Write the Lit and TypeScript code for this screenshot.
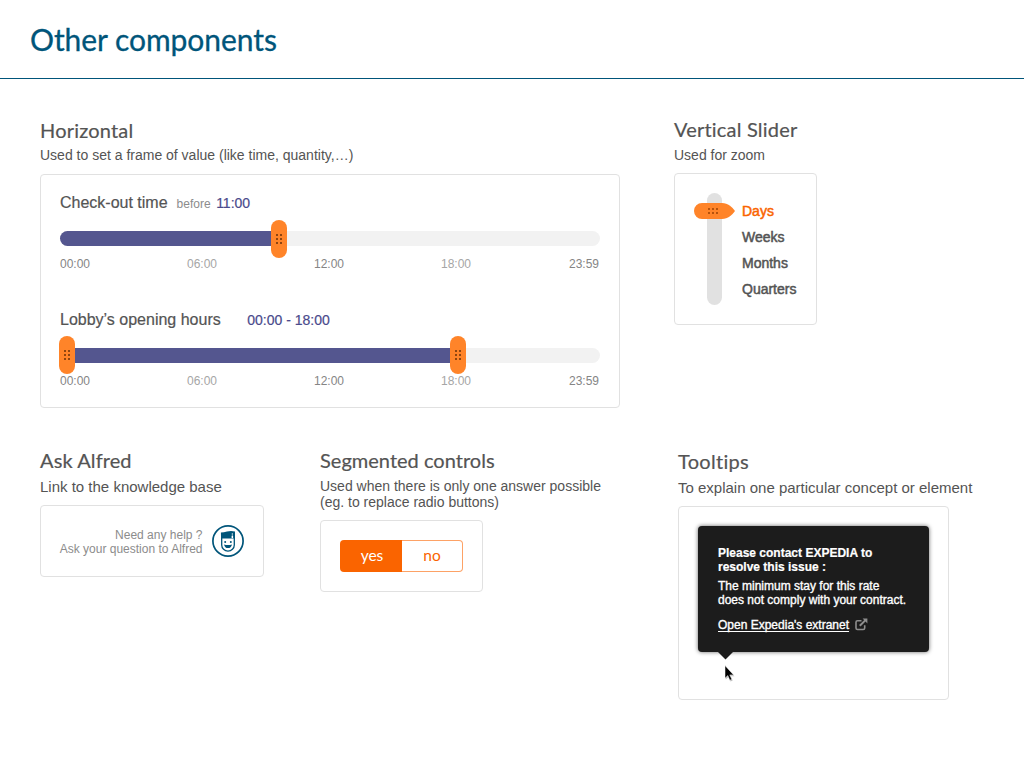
import { LitElement, html, css, svg } from "lit";
import { customElement, property } from "lit/decorators.js";

@customElement("range-slider")
class RangeSlider extends LitElement {
  @property({ type: Number }) start = 0;
  @property({ type: Number }) end = 0;
  @property({ type: Boolean }) double = false;

  static styles = css`
    :host { display: block; }
    .track { position: relative; height: 15px; border-radius: 8px; background: #f2f2f2; }
    .fill { height: 15px; border-radius: 8px 0 0 8px; background: #54568f; }
    .handle { position: absolute; top: -11px; width: 16px; height: 38px; border-radius: 8px; background: #ff8429; }
    .handle.up { top: -12px; }
    .handle svg { display: block; }
    .ticks { display: grid; grid-template-columns: 127px 127px 127px 128px auto; margin-top: 11px;
      font: 12px/14px "Liberation Sans", Arial, sans-serif; color: #858585; }
    .minor { color: #a6a6a6; }
  `;

  private handle(x: number) {
    return html`<div class="handle ${this.double ? "up" : ""}" style="left:${x}px">
      <svg width="16" height="38" fill="#8f4510">
        ${[14, 18, 22].map((y) => svg`<rect x="5" y=${y} width="2" height="2"/><rect x="9" y=${y} width="2" height="2"/>`)}
      </svg>
    </div>`;
  }

  render() {
    return html`
      <div class="track">
        <div class="fill" style="width:${this.end + 8}px"></div>
        ${this.double ? this.handle(this.start) : ""}${this.handle(this.end)}
      </div>
      <div class="ticks">
        <span>00:00</span><span class="minor">06:00</span><span>12:00</span><span class="minor">18:00</span><span>23:59</span>
      </div>`;
  }
}

@customElement("app-root")
class AppRoot extends LitElement {
  static styles = css`
    :host { display: block; width: 1024px; height: 768px; overflow: hidden; background: #fff; color: #545454;
      font-family: "Liberation Sans", Arial, sans-serif; }
    * { box-sizing: border-box; }
    h1, h2, p { margin: 0; font-weight: 400; white-space: nowrap; }
    header { height: 79px; padding: 21px 30px 0; border-bottom: 1px solid #00557a; }
    h1 { font: 30px/36px Lato, sans-serif; color: #00557a; letter-spacing: -0.05px; -webkit-text-stroke: 0.3px #00557a; }
    h2 { font: 20px/24px Lato, sans-serif; color: #545454; letter-spacing: 0.2px; -webkit-text-stroke: 0.2px #545454; }
    .row { display: flex; align-items: flex-start; padding-left: 40px; }
    .row.first { height: 369px; padding-top: 39px; }
    .sub { font-size: 14px; line-height: 16px; margin-top: 5px; color: #545454; }
    .sub.large { font-size: 15px; line-height: 18px; }
    .card { border: 1px solid #e1e1e1; border-radius: 4px; }

    .horizontal { width: 580px; margin-right: 54px; }
    .horizontal .card { height: 234px; margin-top: 11px; padding: 19px 19px 0; }
    .label { display: flex; align-items: baseline; height: 18px; font-size: 16px; line-height: 18px; white-space: nowrap;
      -webkit-text-stroke: 0.2px #545454; }
    .before { margin-left: 9px; font-size: 12px; color: #8c8c8c; -webkit-text-stroke: 0; }
    .value { margin-left: 5.5px; font-size: 14px; color: #4a4a8c; -webkit-text-stroke: 0.2px #4a4a8c; }
    .hours { margin-left: 26.5px; }
    range-slider { margin-top: 19px; }
    .second { margin-top: 40px; }

    .vertical { margin-top: -1px; }
    .vertical .sub { margin-top: 6px; }
    .vertical .card { display: flex; width: 143px; height: 152px; margin-top: 10px; padding: 19px 0 0 32px; }
    .rail { position: relative; width: 15px; height: 112px; border-radius: 8px; background: #e1e1e1; }
    .grip { position: absolute; left: -13px; top: 10px; }
    .scale { display: flex; flex-direction: column; gap: 10px; margin: 10px 0 0 20px; font-size: 14px; line-height: 16px;
      -webkit-text-stroke: 0.5px currentColor; }
    .on { color: #fa6400; }

    .alfred { width: 280px; }
    .alfred h2 { letter-spacing: 0.1px; }
    .alfred .sub { margin-top: 6px; }
    .alfred .card { display: flex; width: 224px; height: 72px; margin-top: 9px; padding: 19px 19px 0 0; justify-content: flex-end; }
    .help { margin: 3px 9.5px 0 0; text-align: right; font-size: 12px; line-height: 14px; color: #8c8c8c; white-space: nowrap; }
    .segmented { width: 358px; }
    .segmented h2 { letter-spacing: 0.02px; }
    .segmented .sub { margin-top: 6px; }
    .segmented .card { width: 163px; height: 72px; margin-top: 10px; padding: 19px; }
    .segments { display: flex; width: 123px; height: 32px; font: 15.5px/31px Lato, sans-serif; text-align: center; }
    .yes { width: 62px; padding-left: 2px; border-radius: 4px 0 0 4px; background: #fa6400; color: #fff; }
    .no { flex: 1; border: 1px solid #fda266; border-left: 0; border-radius: 0 4px 4px 0; line-height: 29px; color: #fa6400; }

    .tips { margin-top: 1px; }
    .tips h2 { letter-spacing: 0.3px; }
    .tips .sub { margin-top: 6px; }
    .tips .card { width: 271px; height: 194px; margin-top: 9px; padding: 19px; }
    .tooltip { position: relative; width: 231px; height: 126px; padding: 20px 20px 0; border-radius: 4px; background: #1c1c1c;
      box-shadow: 0 0 4px rgba(0,0,0,.6); color: #fff; font-size: 12px; line-height: 14px; }
    .strong { font-weight: 700; -webkit-text-stroke: 0.2px #fff; }
    .plain { margin-top: 5px; -webkit-text-stroke: 0.35px #fff; }
    .link { display: flex; margin-top: 11px; }
    .link span { text-decoration: underline; text-underline-offset: 2px; -webkit-text-stroke: 0.35px #fff; }
    .link svg { margin-left: 6px; }
    .arrow { position: absolute; left: 20px; top: 126px; }
    .cursor { position: absolute; left: 25px; top: 138px; }
  `;

  render() {
    return html`
      <header><h1>Other components</h1></header>
      <div class="row first">
        <section class="horizontal">
          <h2>Horizontal</h2>
          <p class="sub">Used to set a frame of value (like time, quantity,…)</p>
          <div class="card">
            <div class="label">Check-out time<span class="before">before</span><span class="value">11:00</span></div>
            <range-slider .end=${211}></range-slider>
            <div class="label second">Lobby’s opening hours<span class="value hours">00:00 - 18:00</span></div>
            <range-slider double .start=${-1} .end=${390}></range-slider>
          </div>
        </section>
        <section class="vertical">
          <h2>Vertical Slider</h2>
          <p class="sub">Used for zoom</p>
          <div class="card">
            <div class="rail">
              <svg class="grip" width="41" height="16">
                <path fill="#ff8429" d="M8 0H28C34 0 38 4 41 8C38 12 34 16 28 16H8A8 8 0 0 1 8 0Z"/>
                <g fill="#b5520c">${[14, 18, 22].map((x) => svg`<rect x=${x} y="5" width="2" height="2"/><rect x=${x} y="9" width="2" height="2"/>`)}</g>
              </svg>
            </div>
            <div class="scale"><span class="on">Days</span><span>Weeks</span><span>Months</span><span>Quarters</span></div>
          </div>
        </section>
      </div>
      <div class="row">
        <section class="alfred">
          <h2>Ask Alfred</h2>
          <p class="sub large">Link to the knowledge base</p>
          <div class="card">
            <div class="help">Need any help ?<br>Ask your question to Alfred</div>
            <svg width="32" height="32" viewBox="0 0 32 32">
              <circle cx="16" cy="16" r="15.1" fill="#fff" stroke="#00557a" stroke-width="1.7"/>
              <path d="M9.7 12V20A6.3 6.1 0 0 0 22.3 20V12" fill="#fff" stroke="#00557a" stroke-width="1.3"/>
              <path d="M8.9 7.4Q12 7.2 15 6.4Q19 5.6 23 6.4V13.6H9.9V15H9.1Z" fill="#00557a"/>
              <path d="M20.3 8V11.4" stroke="#fff" stroke-width=".7"/>
              <rect x="19.6" y="11" width="1.5" height="2.2" fill="#fff"/>
              <circle cx="13.2" cy="17" r="1" fill="#00557a"/><circle cx="18.8" cy="17" r="1" fill="#00557a"/>
              <path d="M12 19.4Q16 20.6 20 19.4Q19.2 23 16 23Q12.8 23 12 19.4Z" fill="#00557a"/>
            </svg>
          </div>
        </section>
        <section class="segmented">
          <h2>Segmented controls</h2>
          <p class="sub">Used when there is only one answer possible<br>(eg. to replace radio buttons)</p>
          <div class="card"><div class="segments"><div class="yes">yes</div><div class="no">no</div></div></div>
        </section>
        <section class="tips">
          <h2>Tooltips</h2>
          <p class="sub large">To explain one particular concept or element</p>
          <div class="card">
            <div class="tooltip">
              <p class="strong">Please contact EXPEDIA to<br>resolve this issue :</p>
              <p class="plain">The minimum stay for this rate<br>does not comply with your contract.</p>
              <div class="link"><span>Open Expedia's extranet</span>
                <svg width="13" height="13" viewBox="0 0 13 13" fill="none" stroke="#8e8e8e" stroke-width="1.6">
                  <path d="M6.5 2.8H2.5Q1 2.8 1 4.3V10Q1 11.5 2.5 11.5H8.2Q9.7 11.5 9.7 10V7.2"/>
                  <path d="M4.8 7.8L10.5 2.1" stroke-width="2"/>
                  <path d="M7.6 .6H12.4V5.4Z" fill="#8e8e8e" stroke="none"/>
                </svg>
              </div>
              <svg class="arrow" width="15" height="8"><path fill="#1c1c1c" d="M0 0H15L7.5 7.5Z"/></svg>
              <svg class="cursor" width="14" height="20">
                <path d="M2 2V14.5L4.8 12L6.8 16.6L9 15.6L7 11.2H10.8Z" transform="translate(.7 1)" fill="#000" opacity=".25"/>
                <path d="M2 1.6V14.2L4.8 11.6L6.8 16.2L8.8 15.3L6.8 10.9H10.6Z" fill="#000" stroke="#fff" stroke-width=".5"/>
              </svg>
            </div>
          </div>
        </section>
      </div>`;
  }
}
